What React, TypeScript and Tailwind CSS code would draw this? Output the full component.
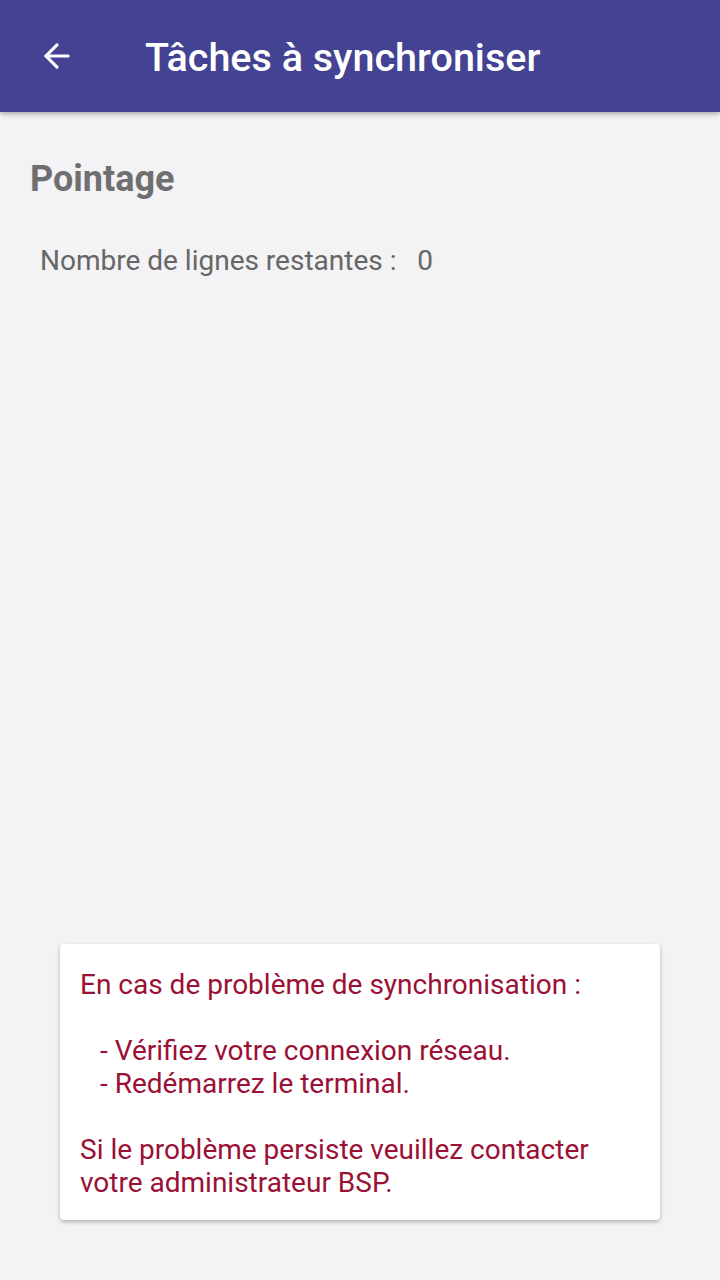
import { ArrowLeft } from "lucide-react";

export default function App() {
  return (
    <div
      className="flex min-h-[1280px] w-[720px] flex-col bg-[#f3f2f5]"
      style={{ fontFamily: "Roboto, 'Liberation Sans', sans-serif" }}
    >
      <header className="relative z-10 flex h-[112px] items-center bg-[#444393] shadow-[0_2px_5px_rgba(0,0,0,0.3)]">
        <div className="flex w-[145px] items-center pl-[38px]">
          <ArrowLeft className="h-[38px] w-[38px] text-white" strokeWidth={2} />
        </div>
        <h1 className="pt-[4px] text-[39.5px] font-medium text-white">
          Tâches à synchroniser
        </h1>
      </header>

      <main className="flex flex-1 flex-col px-[30px]">
        <h2 className="mt-[43px] text-[36px] font-bold leading-[48px] text-[#6f6f6f]">
          Pointage
        </h2>
        <p className="mt-[42px] pl-[10px] text-[28px] leading-[32px] text-[#666666]">
          Nombre de lignes restantes :&nbsp;&nbsp; 0
        </p>

        <div className="flex-1" />

        <div className="mx-[30px] mb-[60px] rounded-[4px] bg-white px-[20px] pb-[21px] pt-[24px] text-[28px] leading-[33px] text-[#9b1035] shadow-[0_2px_4px_rgba(0,0,0,0.28)]">
          <p>En cas de problème de synchronisation :</p>
          <p>&nbsp;</p>
          <p className="pl-[20px]">- Vérifiez votre connexion réseau.</p>
          <p className="pl-[20px]">- Redémarrez le terminal.</p>
          <p>&nbsp;</p>
          <p>
            Si le problème persiste veuillez contacter
            <br />
            votre administrateur BSP.
          </p>
        </div>
      </main>
    </div>
  );
}
